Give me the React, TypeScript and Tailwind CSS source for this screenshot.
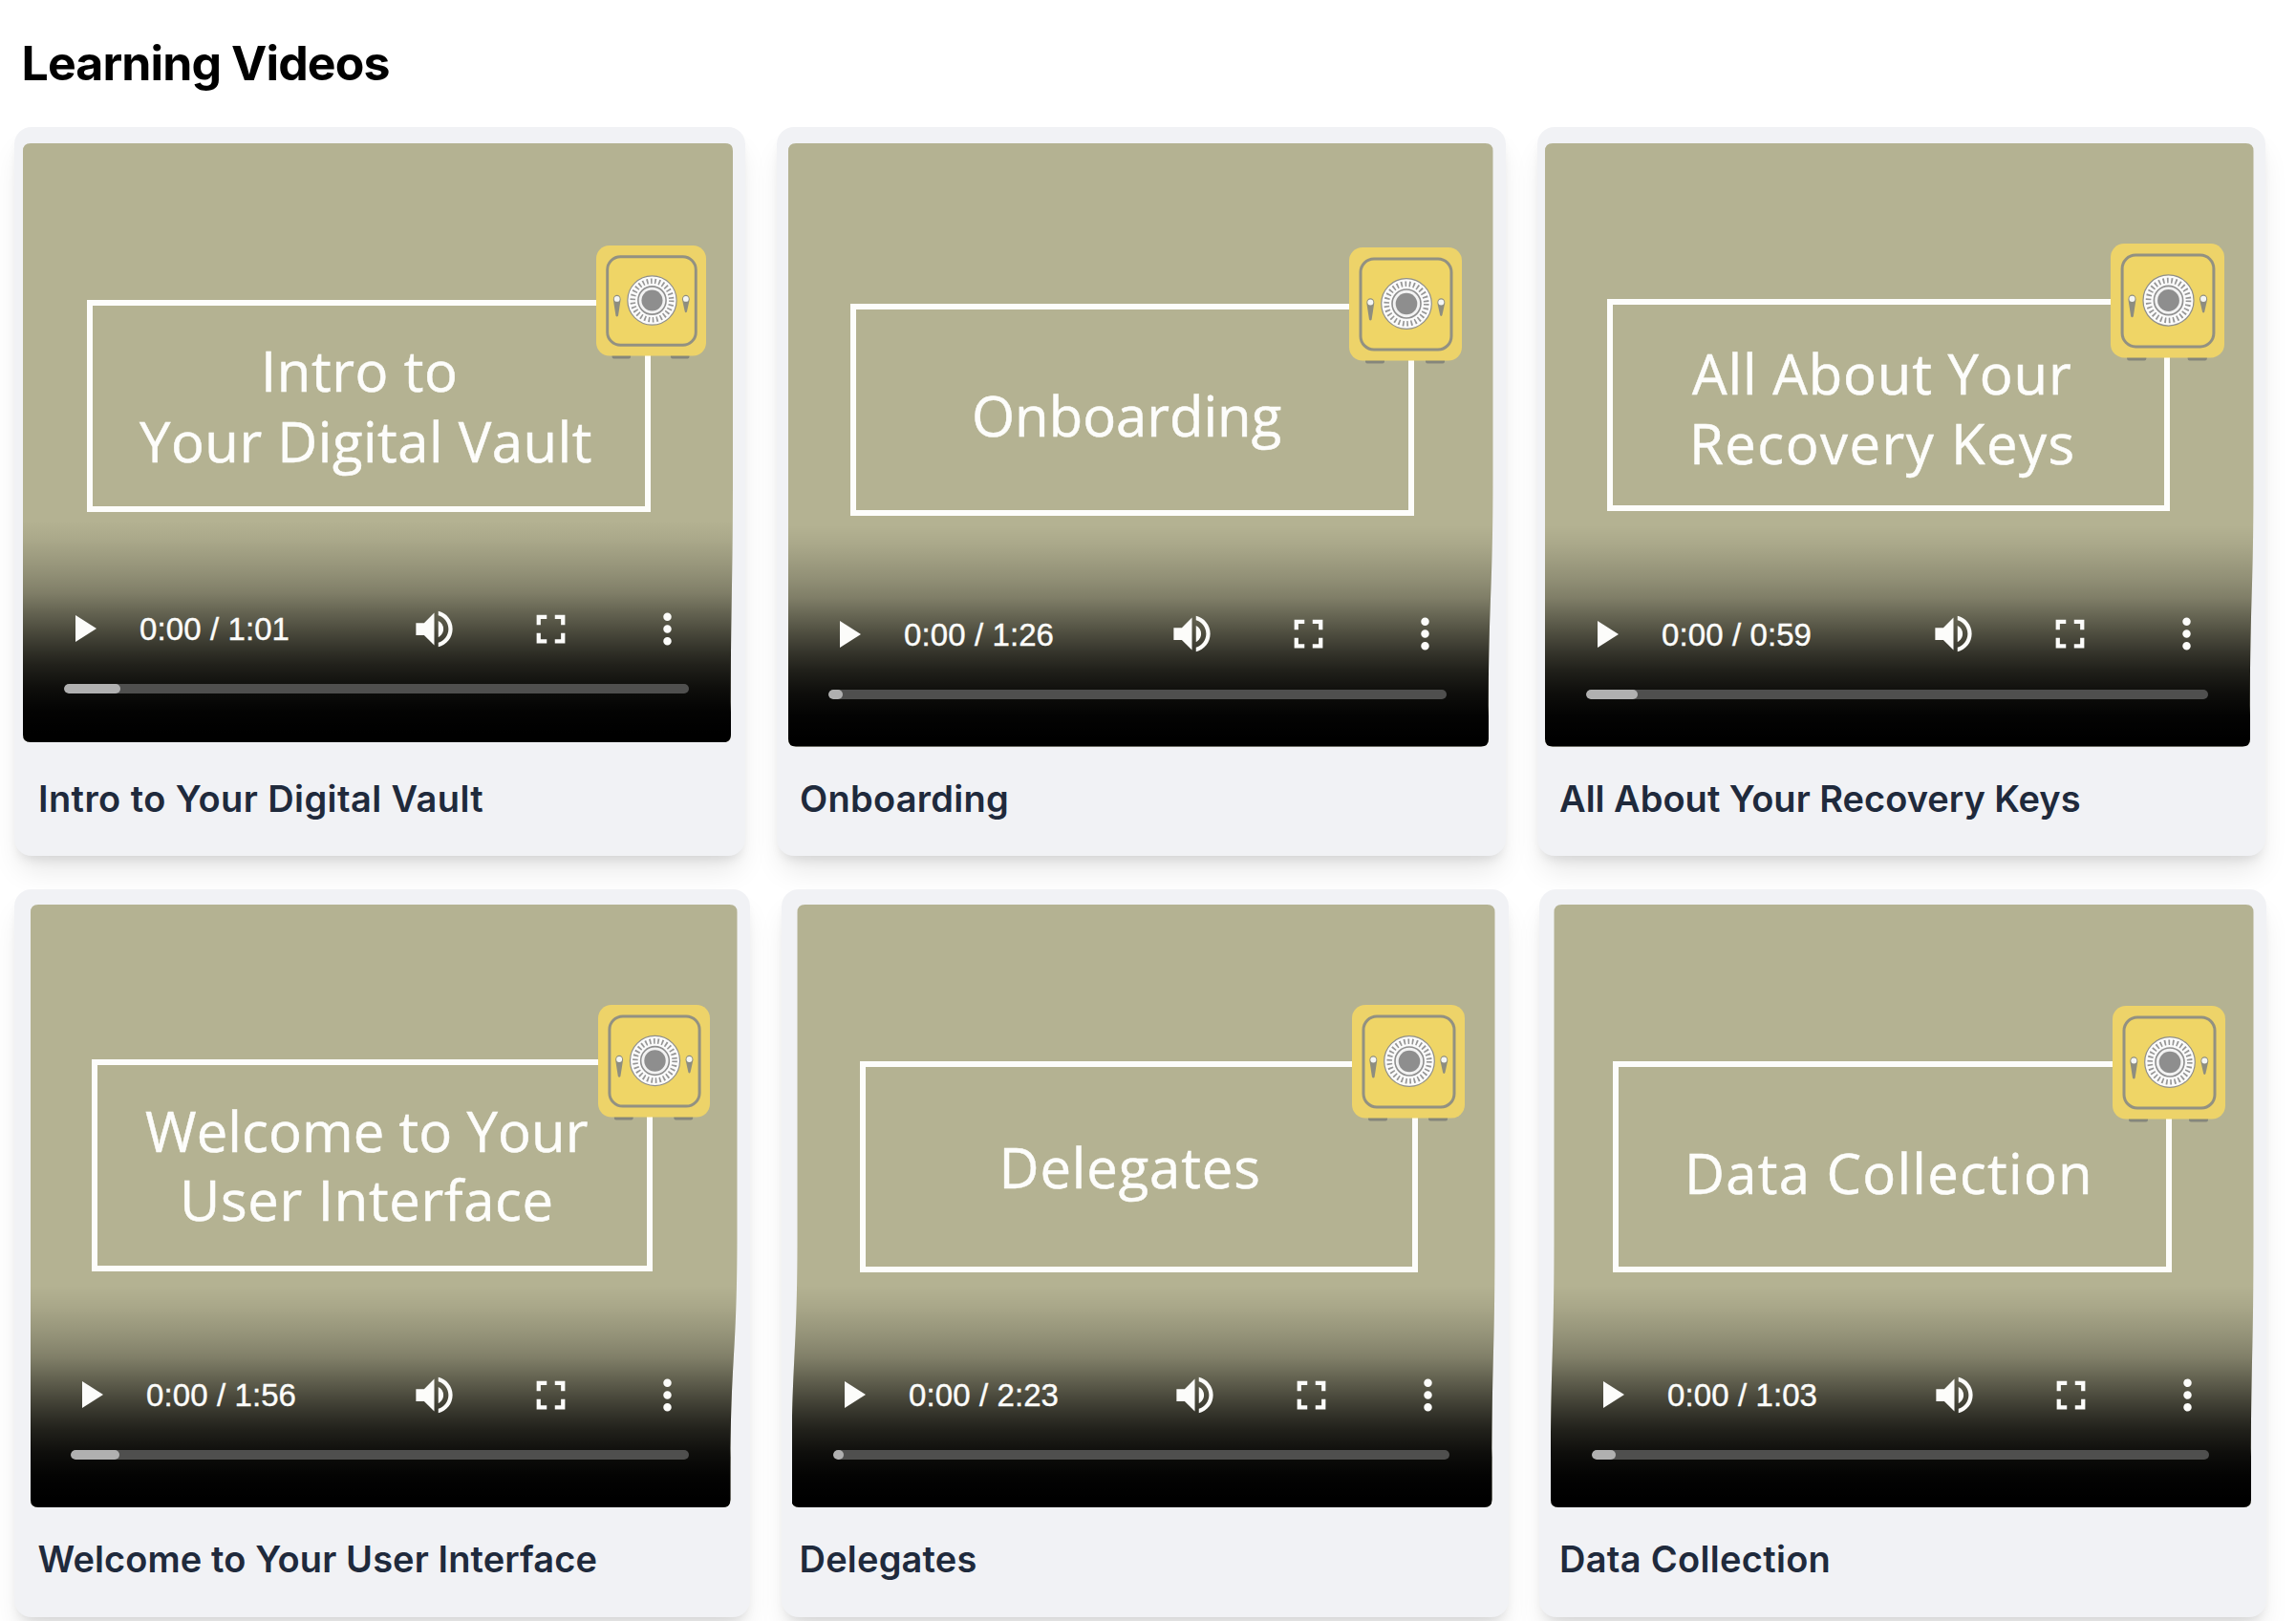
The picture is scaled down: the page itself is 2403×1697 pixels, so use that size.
import { MdFullscreen, MdMoreVert, MdVolumeUp } from 'react-icons/md';

type TitleLine = {
	text: string;
	className: string;
};

type Video = {
	title: string;
	duration: string;
	lines: TitleLine[];
	// how far each screen edge leans in, in px
	edges: { w: number; h: number; tl: number; bl: number; br: number };
	buffered: number;
	screenClass: string;
	frameClass: string;
	safeClass: string;
	controlsClass: string;
	captionClass: string;
};

const rowOne: Video[] = [
	{
		title: 'Intro to Your Digital Vault',
		duration: '1:01',
		lines: [
			{ text: 'Intro to', className: 'ml-[176px] tracking-[0.6px]' },
			{ text: 'Your Digital Vault', className: 'ml-[49px] tracking-[0.5px]' },
		],
		edges: { w: 743, h: 627, tl: 0, bl: 0, br: 2 },
		buffered: 59,
		screenClass: 'ml-[9px] mt-[17px] h-[627px] w-[743px]',
		frameClass: 'ml-[67px] mt-[164px] h-[222px] w-[590px] pt-[31px] leading-[74px]',
		safeClass: 'left-[527px] top-[-63px] w-[115px]',
		controlsClass: 'pl-[43px] pr-[46px] pb-[51px]',
		captionClass: 'ml-[25px] mt-[31px] tracking-[0.42px]',
	},
	{
		title: 'Onboarding',
		duration: '1:26',
		lines: [{ text: 'Onboarding', className: 'ml-[121px]' }],
		edges: { w: 737.5, h: 631.5, tl: 0, bl: 0, br: 4.5 },
		buffered: 15,
		screenClass: 'ml-3 mt-[17px] h-[631.5px] w-[737.5px]',
		frameClass: 'ml-[65px] mt-[168px] h-[222px] w-[590px] pt-[74px] leading-[74px]',
		safeClass: 'left-[516px] top-[-65px] w-[118px]',
		controlsClass: 'pl-[42px] pr-[48.5px] pb-[50px]',
		captionClass: 'ml-6 mt-[26.5px] tracking-[0.25px]',
	},
	{
		title: 'All About Your Recovery Keys',
		duration: '0:59',
		lines: [
			{ text: 'All About Your', className: 'ml-[83px] tracking-[0.82px]' },
			{ text: 'Recovery Keys', className: 'ml-[80px] tracking-[1.5px]' },
		],
		edges: { w: 741.5, h: 631.5, tl: 0, bl: 0, br: 3.5 },
		buffered: 54,
		screenClass: 'ml-2 mt-[17px] h-[631.5px] w-[741.5px]',
		frameClass: 'ml-[65px] mt-[163px] h-[222px] w-[589px] pt-[35px] leading-[73px]',
		safeClass: 'left-[521px] top-[-64px] w-[119px]',
		controlsClass: 'pl-[43px] pr-[48px] pb-[50px]',
		captionClass: 'ml-[23px] mt-[26.5px]',
	},
];

const rowTwo: Video[] = [
	{
		title: 'Welcome to Your User Interface',
		duration: '1:56',
		lines: [
			{ text: 'Welcome to Your', className: 'ml-[50px] tracking-[0.1px]' },
			{ text: 'User Interface', className: 'ml-[86px] tracking-[0.7px]' },
		],
		edges: { w: 739.5, h: 631, tl: 0, bl: 0, br: 7 },
		buffered: 51,
		screenClass: 'ml-[17px] mt-4 h-[631px] w-[739.5px]',
		frameClass: 'ml-[64px] mt-[162px] h-[222px] w-[587px] pt-[33px] leading-[72px]',
		safeClass: 'left-[524px] top-[-63px] w-[117px]',
		controlsClass: 'pl-[42px] pr-[50.5px] pb-[50px]',
		captionClass: 'ml-[24.5px] mt-[26px] tracking-[0.1px]',
	},
	{
		title: 'Delegates',
		duration: '2:23',
		lines: [{ text: 'Delegates', className: 'ml-[140px] tracking-[0.85px]' }],
		edges: { w: 736, h: 631, tl: 6, bl: 0, br: 3 },
		buffered: 11,
		screenClass: 'ml-[11px] mt-4 h-[631px] w-[736px]',
		frameClass: 'ml-[71px] mt-[164px] h-[221px] w-[584px] pt-[68px] leading-[73px]',
		safeClass: 'left-[509px] top-[-65px] w-[118px]',
		controlsClass: 'pl-[43.5px] pr-[47.5px] pb-[50px]',
		captionClass: 'ml-[19px] mt-[26px] tracking-[0.2px]',
	},
	{
		title: 'Data Collection',
		duration: '1:03',
		lines: [{ text: 'Data Collection', className: 'ml-[69px] tracking-[1.25px]' }],
		edges: { w: 735.5, h: 631, tl: 3.5, bl: 0, br: 2.5 },
		buffered: 25,
		screenClass: 'ml-3 mt-4 h-[631px] w-[735.5px]',
		frameClass: 'ml-[65px] mt-[164px] h-[221px] w-[585px] pt-[74px] leading-[73px]',
		safeClass: 'left-[517px] top-[-64px] w-[118px]',
		controlsClass: 'pl-[43px] pr-[47px] pb-[50px]',
		captionClass: 'ml-[21px] mt-[26px] tracking-[0.3px]',
	},
];

const screenPath = ({ w, h, tl, bl, br }: Video['edges']) => {
	const r = 8;
	const a = h * 0.55;
	const b = h * 0.95;
	const m = (a + b) / 2;
	return [
		`M${tl + r} 0H${w - r}Q${w} 0 ${w} ${r}`,
		`V${a}C${w} ${m} ${w - br} ${m} ${w - br} ${b}`,
		`V${h - r}Q${w - br} ${h} ${w - br - r} ${h}`,
		`H${bl + r}Q${bl} ${h} ${bl} ${h - r}`,
		`V${b}C${bl} ${m} ${tl} ${m} ${tl} ${a}`,
		`V${r}Q${tl} 0 ${tl + r} 0Z`,
	].join('');
};

const Safe = ({ className }: { className: string }) => (
	<svg viewBox="0 0 118 122" className={`absolute h-auto ${className}`}>
		<rect x="17" y="114" width="20" height="7.5" rx="2" fill="#85867b" />
		<rect x="80" y="114" width="20" height="7.5" rx="2" fill="#85867b" />
		<rect width="118" height="118.5" rx="14" fill="#edd369" />
		<rect x="12" y="12" width="95" height="95" rx="14" fill="#efd566" stroke="#929182" strokeWidth="3" />
		{/* handles */}
		<path d="M18.3 58C18.3 51.5 26.3 51.5 26.3 58L23.6 75.5Q22.3 77.5 21 75.5Z" fill="#8d8d80" />
		<circle cx="22.3" cy="57.4" r="3" fill="#f4f6f4" />
		<path d="M92.3 58C92.3 51.5 100.3 51.5 100.3 58L97.4 71Q96.3 73 95.2 71Z" fill="#8d8d80" />
		<circle cx="96.3" cy="57.4" r="3" fill="#f4f6f4" />
		{/* dial */}
		<circle cx="60" cy="59" r="26.3" fill="#fbfbfb" stroke="#8f8f8c" strokeWidth="1.2" />
		<circle cx="60" cy="59" r="20.8" fill="none" stroke="#969696" strokeWidth="5.6" strokeDasharray="1.7 2.656" />
		<circle cx="60" cy="59" r="15" fill="#f3f3f3" stroke="#8f8f8f" strokeWidth="1.6" />
		<circle cx="60" cy="59" r="11.3" fill="#8e8e8e" />
	</svg>
);

const Controls = ({ video }: { video: Video }) => (
	<div
		className={`absolute inset-x-0 bottom-0 flex h-[237px] flex-col justify-end bg-[linear-gradient(to_bottom,rgba(0,0,0,0)_2%,rgba(0,0,0,0.06)_11%,rgba(0,0,0,0.19)_25%,rgba(0,0,0,0.29)_34%,rgba(0,0,0,0.43)_42%,rgba(0,0,0,0.57)_50%,rgba(0,0,0,0.7)_58%,rgba(0,0,0,0.82)_66%,rgba(0,0,0,0.92)_76%,rgba(0,0,0,0.98)_86%,#000_96%)] ${video.controlsClass}`}
	>
		<div className="flex h-9 items-center text-[#fcfcfa]">
			<svg viewBox="0 0 22 28" className="ml-3 h-7 w-[22px] fill-current">
				<path d="M0 0L22 14L0 28Z" />
			</svg>
			<span className="ml-[45px] whitespace-nowrap pt-[2px] font-['Liberation_Sans',Arial,sans-serif] text-[33px] leading-9 tracking-[0.1px] [-webkit-text-stroke:0.4px_#fcfcfa]">
				0:00 / {video.duration}
			</span>
			<div className="-mr-[3px] ml-auto flex shrink-0 items-center gap-[71px]">
				<MdVolumeUp className="size-[51px]" />
				<MdFullscreen className="size-[51px]" />
				<MdMoreVert className="size-[51px]" />
			</div>
		</div>
		<div className="mt-10 h-2.5 shrink-0 overflow-hidden rounded-full bg-[#4f4f4e]">
			<div className="h-full rounded-full bg-[#b0b0b0]" style={{ width: video.buffered }} />
		</div>
	</div>
);

const VideoCard = ({ video }: { video: Video }) => (
	<div className="flex flex-col rounded-[18px] bg-[#f1f2f5] shadow-[0_20px_30px_-6px_rgba(0,0,0,0.1),0_8px_12px_-5px_rgba(0,0,0,0.1)]">
		<div
			className={`relative flex shrink-0 items-start bg-[#b4b292] ${video.screenClass}`}
			style={{ clipPath: `path("${screenPath(video.edges)}")` }}
		>
			<div
				className={`relative flex flex-col items-start border-[6px] border-[#fdfdfb] font-['Open_Sans',sans-serif] text-[58px] text-[#fdfdfb] [-webkit-text-stroke:0.5px_#fdfdfb] ${video.frameClass}`}
			>
				{video.lines.map((line) => (
					<span key={line.text} className={`whitespace-nowrap ${line.className}`}>
						{line.text}
					</span>
				))}
				<Safe className={video.safeClass} />
			</div>
			<Controls video={video} />
		</div>
		<h2 className={`whitespace-nowrap text-[38px] font-semibold leading-[57px] text-[#1f2a3c] ${video.captionClass}`}>
			{video.title}
		</h2>
	</div>
);

export default function App() {
	return (
		<div className="h-[1697px] w-[2403px] overflow-hidden bg-white font-['Inter',sans-serif]">
			<header className="h-[133px] pl-[22.5px] pt-[36px]">
				<h1 className="text-[50px] font-bold leading-[60px] tracking-[-0.89px] text-black">Learning Videos</h1>
			</header>

			<main className="flex h-[1564px] flex-col gap-[35px] overflow-hidden pl-[15px]">
				<div className="grid h-[763px] shrink-0 grid-cols-[765px_763px_762px] gap-[33px]">
					{rowOne.map((video) => (
						<VideoCard key={video.title} video={video} />
					))}
				</div>
				<div className="grid h-[762px] shrink-0 grid-cols-[770px_761px_761px] gap-[32.5px]">
					{rowTwo.map((video) => (
						<VideoCard key={video.title} video={video} />
					))}
				</div>
			</main>
		</div>
	);
}
